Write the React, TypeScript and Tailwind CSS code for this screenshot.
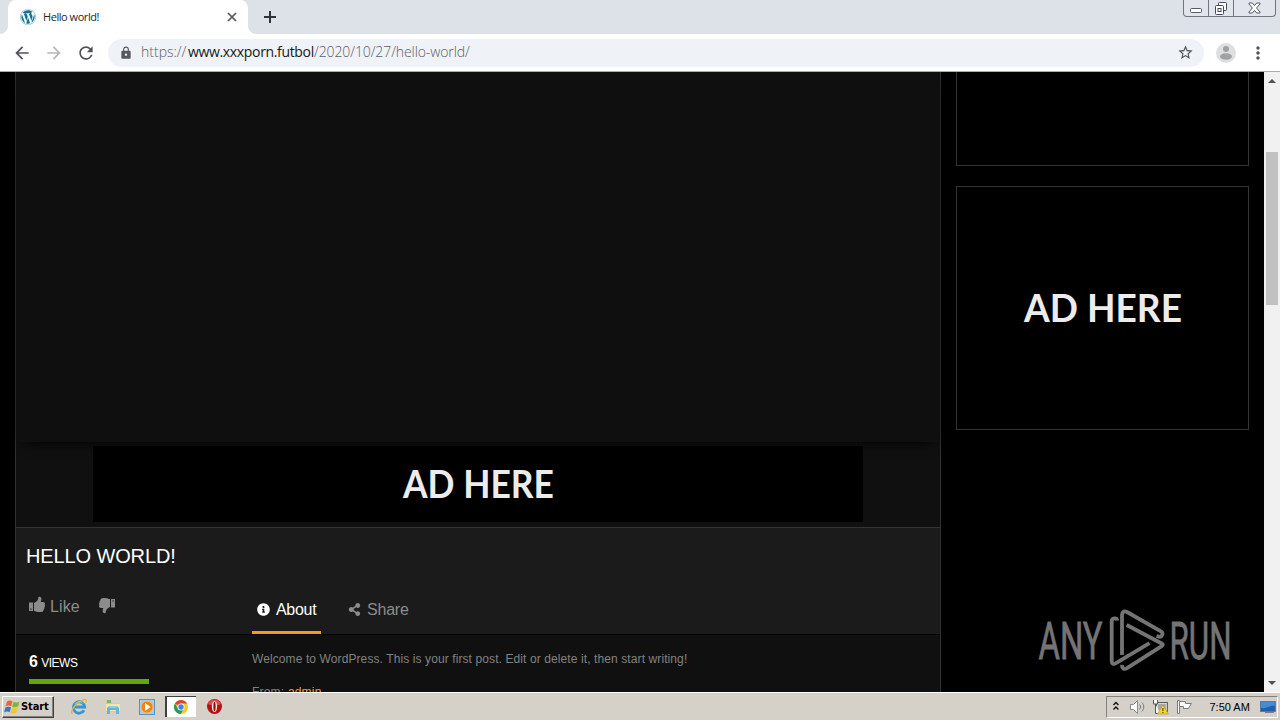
import type { ReactNode } from "react";
import {
  MdArrowBack,
  MdArrowForward,
  MdRefresh,
  MdLock,
  MdStarBorder,
  MdMoreVert,
} from "react-icons/md";
import { FaWordpress, FaInfoCircle, FaShareAlt } from "react-icons/fa";

function WindowButtons() {
  return (
    <div className="mr-1 flex h-[17px] w-[93px] rounded-b-[4px] border border-t-0 border-[#70757f] bg-[#e2e5eb]">
      <div className="flex w-[25px] items-center justify-center border-r border-[#70757f]">
        <svg width="14" height="14" viewBox="0 0 14 14" fill="#fff" stroke="#555a66">
          <rect x="1.5" y="7.5" width="11" height="4" rx="1" />
        </svg>
      </div>
      <div className="flex w-[25px] items-center justify-center border-r border-[#70757f]">
        <svg width="14" height="14" viewBox="0 0 14 14" fill="#fff" stroke="#454a56">
          <rect x="4.5" y="1.5" width="8" height="8" rx="1" />
          <rect x="1.5" y="4.5" width="8" height="9" rx="1" />
          <rect x="4" y="7.5" width="3" height="3" />
        </svg>
      </div>
      <div className="flex flex-1 items-center justify-center">
        <svg width="13" height="12" viewBox="0 0 13 12" fill="#fff" stroke="#555a66">
          <path d="M1 1h3.3l2.2 2.5L8.7 1H12v1L8.6 6l3.4 4v1H8.7L6.5 8.500 4.300 11H1v-1l3.400-4L1 2z" />
        </svg>
      </div>
    </div>
  );
}

function TabStrip() {
  return (
    <div className="flex h-[34px] items-start bg-[#dde1e8]">
      <div className="relative ml-2 flex h-[34px] w-[240px] items-center rounded-t-lg bg-white pl-3 pr-[9px]">
        <svg className="absolute -left-2 bottom-0" width="8" height="8" viewBox="0 0 8 8">
          <path d="M8 0v8H0a8 8 0 0 0 8-8z" fill="#fff" />
        </svg>
        <svg className="absolute -right-2 bottom-0" width="8" height="8" viewBox="0 0 8 8">
          <path d="M0 0v8h8a8 8 0 0 1-8-8z" fill="#fff" />
        </svg>
        <FaWordpress className="h-4 w-4 text-[#18719b]" />
        <span className="ml-[7px] flex-1 text-[11px] tracking-[-0.45px] text-[#27282b] [font-family:'Open_Sans',sans-serif]">
          Hello world!
        </span>
        <svg width="14" height="14" viewBox="0 0 14 14" stroke="#55585d" strokeWidth="1.700">
          <path d="M3 3l8 8M11 3l-8 8" />
        </svg>
      </div>
      <svg className="ml-[13px] mt-2" width="18" height="18" viewBox="0 0 18 18" stroke="#303338" strokeWidth="2">
        <path d="M3 9h12M9 3v12" />
      </svg>
      <div className="flex-1" />
      <WindowButtons />
    </div>
  );
}

function Toolbar() {
  return (
    <div className="flex h-[38px] items-center border-b border-[#a9abae] bg-white pl-3">
      <MdArrowBack className="h-5 w-5 text-[#4f5257]" />
      <MdArrowForward className="ml-3 h-5 w-5 text-[#b5b7ba]" />
      <MdRefresh className="ml-3 h-5 w-5 text-[#4f5257]" />
      <div className="ml-3 flex h-7 w-[1096px] items-center rounded-full bg-[#eff2f6] pl-[11px] pr-[10px]">
        <MdLock className="h-[14px] w-[14px] text-[#55585d]" />
        <p className="mb-0.5 ml-2 flex flex-1 whitespace-nowrap text-[14px] font-light text-[#5c6066] [font-family:'Open_Sans',sans-serif]">
          <span className="w-[47px]">https://</span>
          <span className="w-[126px] font-normal tracking-[-0.34px] text-[#17181a]">www.xxxporn.futbol</span>
          <span className="tracking-[-0.1px]">/2020/10/27/hello-world/</span>
        </p>
        <MdStarBorder className="h-[17px] w-[17px] text-[#4f5257]" />
      </div>
      <svg className="ml-3" width="20" height="20" viewBox="0 0 20 20">
        <circle cx="10" cy="10" r="10" fill="#dedfe1" />
        <circle cx="10" cy="6" r="3" fill="#a0a1a3" />
        <ellipse cx="10" cy="13.500" rx="6" ry="3.200" fill="#a0a1a3" />
      </svg>
      <MdMoreVert className="ml-3 h-5 w-5 text-[#4f5257]" />
    </div>
  );
}

function ThumbIcon({ className }: { className: string }) {
  return (
    <svg className={className} width="16" height="16" viewBox="0 0 16 16" fill="currentColor">
      <path d="M0 6.500h4V15H0zM1.300 12.600h1.200v1.200H1.300z" fillRule="evenodd" />
      <path d="M5 7C6.800 6.200 8.300 5 9 3.200L9.400 1c1.700-.7 3.300.4 3 2.500L11.700 6H14c1.900.1 2.500 1.600 1.600 2.800.6.9.5 1.900-.2 2.500.3 1-.1 1.700-.7 2.100 0 1.700-1.100 2.600-2.900 2.600H9.500c-2 0-3-1-4.500-1.100z" />
    </svg>
  );
}

function VideoColumn() {
  return (
    <main className="ml-[15px] flex w-[926px] flex-col border-x border-[#303030] bg-[#101010]">
      <div className="h-[370px] shrink-0 bg-[#0f0f0f] shadow-[0_6px_12px_-6px_#000]" />
      <div className="flex h-[86px] shrink-0 justify-center border-b border-[#343434] pt-1">
        <div className="relative flex h-[76px] w-[770px] items-center justify-center bg-black">
          <AdLabel width={151} />
        </div>
      </div>

      <div className="flex h-[107px] shrink-0 flex-col border-b border-black bg-[#1b1b1b]">
        <h1 className="ml-[10px] mt-[15px] h-[26px] whitespace-nowrap text-[20px] leading-[26px] tracking-[-0.12px] text-white">
          HELLO WORLD!
        </h1>
        <div className="flex flex-1 items-end text-[16px]">
          <div className="ml-[13px] flex h-[42px] w-[223px] items-start text-[#8c8c8c]">
            <ThumbIcon className="mt-1" />
            <span className="ml-[5px] mt-[3px] leading-6 tracking-[0.1px]">Like</span>
            <ThumbIcon className="ml-[19px] mt-[6px] rotate-180" />
          </div>
          <div className="flex h-[48px] w-[69px] items-start border-b-[3px] border-[#f79a17] text-white">
            <FaInfoCircle className="ml-[5px] mt-[17px] h-[13px] w-[13px]" />
            <span className="ml-[6px] mt-3 leading-6 tracking-[-0.3px]">About</span>
          </div>
          <div className="ml-[27px] flex h-[48px] items-start text-[#8c8c8c]">
            <FaShareAlt className="mt-[17px] h-[13px] w-[13px]" />
            <span className="ml-[6px] mt-3 leading-6 tracking-[-0.2px]">Share</span>
          </div>
        </div>
      </div>

      <div className="flex">
        <div className="ml-[13px] w-[223px] shrink-0 pt-[15px]">
          <p className="h-[24px] text-[12px] leading-6 text-white">
            <b className="text-[16px]">6</b> <span className="tracking-[-0.5px]">VIEWS</span>
          </p>
          <div className="mt-[5px] h-[5px] w-[120px] bg-[#62a70b]" />
        </div>
        <div className="pt-[15px] text-[12px] leading-[18px] text-[#828282]">
          <p className="whitespace-nowrap tracking-[0.1px]">
            Welcome to WordPress. This is your first post. Edit or delete it, then start writing!
          </p>
          <p className="mt-[15px] tracking-[0.2px]">
            From: <a className="text-[#f79a17]">admin</a>
          </p>
        </div>
      </div>
    </main>
  );
}

function AdLabel({ width }: { width: number }) {
  return (
    <svg width={width} height="40" className="overflow-visible">
      <text
        x="0"
        y="33.5"
        textLength={width}
        lengthAdjust="spacingAndGlyphs"
        fontFamily="Lato, sans-serif"
        fontWeight="700"
        fontSize="39"
        fill="#ececec"
      >
        AD HERE
      </text>
    </svg>
  );
}

function Watermark() {
  return (
    <svg
      className="absolute bottom-[19px] right-[30px] overflow-visible"
      width="200"
      height="66"
      viewBox="0 0 200 66"
    >
      <g fontFamily="Roboto, sans-serif" fontSize="52" fill="#747474" stroke="#747474" strokeWidth="0.8">
        <text x="4.500" y="52" textLength="64" lengthAdjust="spacingAndGlyphs">ANY</text>
        <text x="135.500" y="52" textLength="62" lengthAdjust="spacingAndGlyphs">RUN</text>
      </g>
      <g fill="none" stroke="#747474" strokeWidth="3.800" strokeLinejoin="round">
        <path d="M83.300 13.500c-.5-3-5.600-3.200-5.600 1V54c0 3 1.800 3.600 4.300 2.200l33.500-20" />
        <path d="M88 48V8c0-3 2-4.500 5-3l34 19.300c2.500 1.500 1.500 5.500-1.500 5.500l-3-.8" />
        <path d="M92.700 18l35 18.500c1.500.8 1.500 1.700 0 2.700L93 61.200c-3 1.800-5.300 0-5-3.400" />
      </g>
    </svg>
  );
}

function Sidebar() {
  return (
    <aside className="relative flex flex-1 flex-col bg-black pl-[15px]">
      <div className="h-[94px] w-[293px] border border-t-0 border-[#343434]" />
      <div className="mt-5 flex h-[244px] w-[293px] items-center justify-center border border-[#343434]">
        <AdLabel width={158} />
      </div>
      <Watermark />
    </aside>
  );
}

function Scrollbar() {
  return (
    <div className="flex w-4 flex-col items-center bg-[#f1f1f1]">
      <svg width="16" height="17" viewBox="0 0 16 17">
        <path d="M4 11l4-4 4 4z" fill="#505050" />
      </svg>
      <div className="mt-[63px] h-[153px] w-3 bg-[#c1c1c1]" />
      <div className="flex-1" />
      <svg width="16" height="17" viewBox="0 0 16 17">
        <path d="M4 6l4 4 4-4z" fill="#505050" />
      </svg>
    </div>
  );
}

function WindowsFlag() {
  return (
    <svg width="17" height="16" viewBox="0 0 17 16">
      <path d="M3 2.500C5 1 7 1.500 8.500 2.300L7.200 7.300C5.500 6.400 3.600 6.300 1.600 7.500z" fill="#e9682c" />
      <path d="M9.500 2.700c2 1 4 1 6-.2l-1.400 5C12 8.600 10 8.500 8.200 7.700z" fill="#7ab735" />
      <path d="M1.400 8.500c2-1.200 4-1 5.600-.2l-1.300 5C4 12.300 2 12.400 0 13.500z" fill="#3977c6" />
      <path d="M8 8.700c2 1 4 1 5.900-.2l-1.400 5c-2 1.200-4 1-5.800.2z" fill="#f7c52b" />
    </svg>
  );
}

function IeIcon() {
  return (
    <svg width="18" height="18" viewBox="0 0 18 18" fill="none">
      <path d="M14 12.300A5.700 5.700 0 1 1 14.700 9H5" stroke="#3696d5" strokeWidth="2.800" />
      <path d="M5 5.800c2-2.500 6-3 8-.3" stroke="#8ad0f2" />
      <path d="M2.500 15.800C-1 14 6 5 12 2.300c4-1.800 5-.3 4 2.200" stroke="#e1b832" strokeWidth="1.300" />
    </svg>
  );
}

function ExplorerIcon() {
  return (
    <svg width="18" height="18" viewBox="0 0 18 18">
      <path d="M2 3h5l1 2h8v9H2z" fill="#e8cc67" />
      <path d="M3 2h4v3H3z" fill="#73b978" />
      <path d="M2 6h14v7H2z" fill="#f6e9a5" />
      <path d="M3 16v-6l2-2h8l2 2v6h-3v-4H6v4z" fill="#62b5dc" />
      <path d="M5 9h8" stroke="#b7e2ef" />
    </svg>
  );
}

function MediaIcon() {
  return (
    <svg width="18" height="18" viewBox="0 0 18 18">
      <rect x="1.500" y="1.500" width="15" height="15" fill="#a9cde9" stroke="#5693c4" />
      <circle cx="9" cy="9" r="6" fill="#ee8516" stroke="#f5ba68" />
      <path d="M7 5l5.500 4L7 13z" fill="#fff" />
    </svg>
  );
}

function ChromeIcon() {
  return (
    <svg width="16" height="16" viewBox="0 0 16 16">
      <circle cx="8" cy="8" r="7" fill="#f6c928" />
      <path d="M8 8L1.900 4.500A7 7 0 0 1 14.100 4.500H8z" fill="#dc4437" />
      <path d="M1.900 4.500A7 7 0 0 0 7.600 15L11 9.700 8 8 5 9.700z" fill="#279958" />
      <circle cx="8" cy="8" r="3.500" fill="#fff" />
      <circle cx="8" cy="8" r="2.700" fill="#4381e5" />
    </svg>
  );
}

function OperaIcon() {
  return (
    <svg width="17" height="17" viewBox="0 0 17 17">
      <circle cx="8.500" cy="8.500" r="7.500" fill="#b61212" />
      <path d="M2 6a7 7 0 0 1 13 0c-4 2-9 2-13 0z" fill="#d84c49" />
      <ellipse cx="8.500" cy="8.500" rx="2.600" ry="5.600" fill="#f6eaea" />
      <ellipse cx="8.500" cy="8.500" rx="1.100" ry="4.700" fill="#8d0b0b" />
    </svg>
  );
}

function TaskButton({ children, active = false }: { children: ReactNode; active?: boolean }) {
  return (
    <div
      className={
        active
          ? "flex h-[21px] w-[31px] items-center justify-center border-l-2 border-t border-[#404040] bg-white pr-0.5"
          : "flex h-[21px] w-[34px] items-center justify-center"
      }
    >
      {children}
    </div>
  );
}

function Taskbar() {
  return (
    <footer className="flex h-[28px] items-start border-t border-white bg-[#d5d1c8]">
      <button className="ml-[2px] mt-[3px] flex h-[22px] w-[52px] items-center border border-b-[#404040] border-l-white border-r-[#404040] border-t-white pl-[1px] text-[11px] font-bold text-black shadow-[inset_-1px_-1px_0_#85827d]">
        <WindowsFlag />
        <span className="tracking-[-0.1px] [font-family:'DejaVu_Sans_Condensed','DejaVu_Sans',sans-serif]">
          Start
        </span>
      </button>
      <div className="ml-2 mt-[3px] flex">
        <TaskButton>
          <IeIcon />
        </TaskButton>
        <TaskButton>
          <ExplorerIcon />
        </TaskButton>
        <TaskButton>
          <MediaIcon />
        </TaskButton>
        <div className="ml-px mr-[1px] flex">
          <TaskButton active>
            <ChromeIcon />
          </TaskButton>
        </div>
        <TaskButton>
          <OperaIcon />
        </TaskButton>
      </div>
      <div className="flex-1" />
      <div className="mr-[2px] mt-[3px] flex h-[22px] w-[172px] items-center border border-b-white border-l-[#85827d] border-r-white border-t-[#85827d] pl-[5px]">
        <svg width="8" height="12" viewBox="0 0 8 12" fill="none" stroke="#111" strokeWidth="1.400">
          <path d="M1.500 4l2.500-2.500L6.500 4M1.500 8.500L4 6l2.500 2.500" />
        </svg>
        <svg className="ml-[9px]" width="18" height="16" viewBox="0 0 18 16" fill="none" stroke="#858585">
          <path d="M1.500 5.500h3L8.500 1.500v13l-4-4h-3z" fill="#fff" />
          <path d="M10.500 5.500c1.500 1.500 1.500 3.500 0 5M13 3.500c2.500 2.500 2.500 6.500 0 9" stroke="#777" />
        </svg>
        <svg className="ml-[5px]" width="17" height="16" viewBox="0 0 17 16">
          <rect x="4.500" y="3.500" width="11" height="9" fill="#ddd" stroke="#555" />
          <rect x="6" y="5" width="8" height="6" fill="#a8a8a8" />
          <path d="M1.500 1v4h4V1M3.500 5v9.500H8" fill="#fff" stroke="#555" />
          <path d="M11 6l5.500 9h-11z" fill="#f4d71d" stroke="#b39917" strokeWidth="0.600" />
          <path d="M11 9v3M11 13v1.200" stroke="#333" />
        </svg>
        <svg className="ml-[7px]" width="17" height="16" viewBox="0 0 17 16" fill="#fff" stroke="#777">
          <path d="M1.500 1.500h2v13h-2z" />
          <path d="M3.500 2.500h6v2h6l-3 5h-5v-2h-4z" />
        </svg>
        <span className="ml-[17px] w-[43px] whitespace-nowrap text-[11px] text-black">7:50 AM</span>
        <svg className="ml-2" width="17" height="14" viewBox="0 0 17 14">
          <rect x="0.500" y="1.500" width="15" height="10" fill="#215eae" stroke="#567aa2" />
          <path d="M1 2h14v4C9 5 6 9 1 8z" fill="#468bd5" />
          <path d="M5 12.500h9" stroke="#747b82" />
        </svg>
      </div>
    </footer>
  );
}

export default function App() {
  return (
    <div className="flex h-[720px] w-[1280px] flex-col overflow-hidden bg-black [font-family:'Liberation_Sans',Arial,sans-serif]">
      <TabStrip />
      <Toolbar />
      <div className="flex h-[620px] shrink-0 overflow-hidden">
        <VideoColumn />
        <Sidebar />
        <Scrollbar />
      </div>
      <Taskbar />
    </div>
  );
}
